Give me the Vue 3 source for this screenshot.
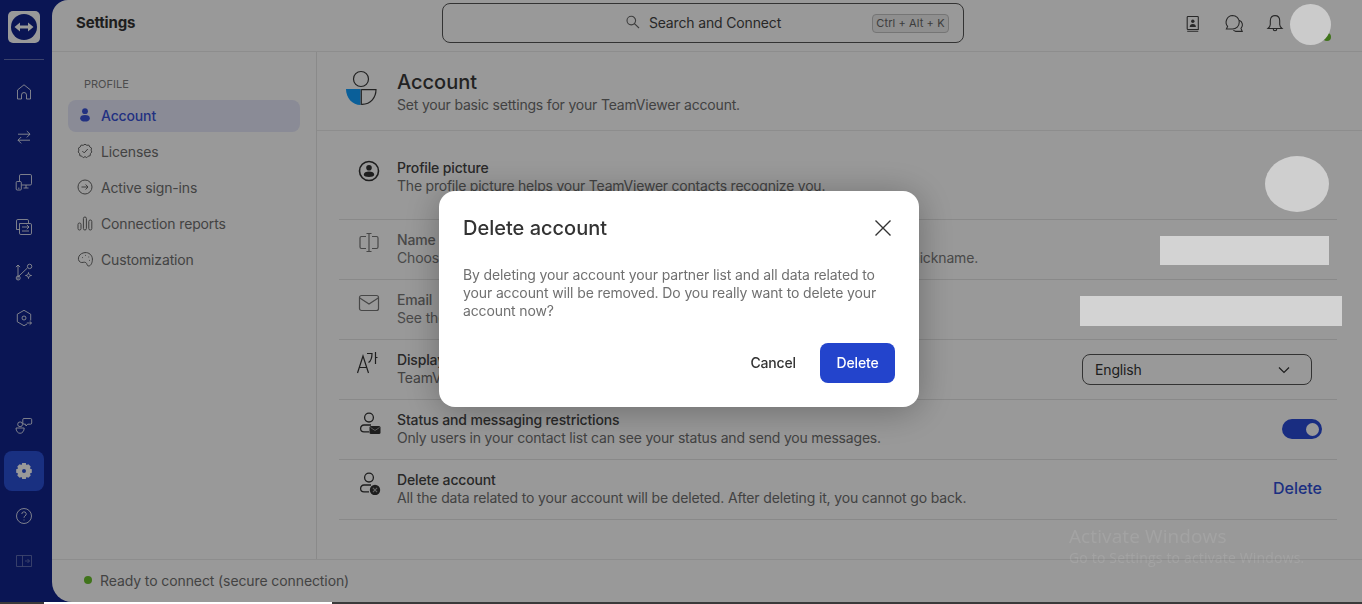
<script setup>
const topIcons = [
  'M2.5 16V7L9 1.8 15.5 7V16H11.5V12A2.5 2.5 0 0 0 6.5 12V16Z',
  'M3 6.2H15M11.8 3L15 6.2 11.8 9.4M15 12.2H3M6.2 9L3 12.2 6.2 15.4',
  'M4.5 8V2.8A1.3 1.3 0 0 1 5.8 1.5H15.2A1.3 1.3 0 0 1 16.5 2.8V10.7A1.3 1.3 0 0 1 15.2 12H6.8M11 12V15M8.5 15H13.5M2.2 8.5H5.3A1 1 0 0 1 6.3 9.5V16A1 1 0 0 1 5.3 17H2.2A1 1 0 0 1 1.2 16V9.5A1 1 0 0 1 2.2 8.5ZM3 15.2H4.5',
  'M1.5 11.5V2.8A1.3 1.3 0 0 1 2.8 1.5H12.2A1.3 1.3 0 0 1 13.5 2.8V5M4.5 5.5H15.2A1.3 1.3 0 0 1 16.5 6.8V15.2A1.3 1.3 0 0 1 15.2 16.5H5.8A1.3 1.3 0 0 1 4.5 15.2ZM1.5 11.5H4.5M7 9H14M11.8 6.8L14 9 11.8 11.2M14 13H7',
  'M3 16.5V2M.9 4.1L3 2 5.1 4.1M3.3 13.6L12.4 5M5.2 15A2 2 0 1 1 1.2 15 2 2 0 1 1 5.2 15ZM16.8 3.4A2.2 2.2 0 1 1 12.4 3.4 2.2 2.2 0 1 1 16.8 3.4ZM13.5 9.5C13.8 11.6 14.4 12.2 16.5 12.5 14.4 12.8 13.8 13.4 13.5 15.5 13.2 13.4 12.6 12.8 10.5 12.5 12.6 12.2 13.2 11.6 13.5 9.5Z',
  'M15.7 11.5V5.2L9 1.3 2.3 5.2V12.8L9 16.7 12 15M11 9A2 2 0 1 1 7 9 2 2 0 1 1 11 9ZM11.8 14H16.5M14.6 12.2L16.5 14 14.6 15.8'
]
const navItems = [
  { label: 'Licenses', d: 'M8 1.2L9.8 2.3 11.9 2.1 12.8 4 14.6 5.1 14.1 7.1 14.8 9 13.4 10.6 13.2 12.7 11.2 13.2 9.7 14.7 8 13.6 6.3 14.7 4.8 13.2 2.8 12.7 2.6 10.6 1.2 9 1.9 7.1 1.4 5.1 3.2 4 4.1 2.1 6.2 2.3ZM5.3 8L7.2 9.9 10.8 6' },
  { label: 'Active sign-ins', d: 'M15 8A7 7 0 1 1 1 8 7 7 0 1 1 15 8ZM4.5 8H11M8.6 5.5L11 8 8.6 10.5' },
  { label: 'Connection reports', d: 'M1 9.5A1.5 1.5 0 0 1 4 9.5V13.5A1.5 1.5 0 0 1 1 13.5ZM6.4 3.5A1.5 1.5 0 0 1 9.4 3.5V13.5A1.5 1.5 0 0 1 6.4 13.5ZM11.8 6.5A1.5 1.5 0 0 1 14.8 6.5V13.5A1.5 1.5 0 0 1 11.8 13.5Z' },
  { label: 'Customization', d: 'M8 1.6C11.8 1.2 15.2 4 15.4 8 15.5 11.5 14 14.8 11.8 15 9.8 15.2 10.4 12.6 8.8 11.6 7 10.5 5.3 12.2 3.4 11.2 1.2 10 .9 7.4 2 5.2 3.2 3 5.3 1.9 8 1.6ZM5 6.6H5.8M8 4.4H8.8M11.4 6H12.2M12.2 9.4H13' }
]
</script>

<template>
  <div class="screen">
    <div class="window">
      <aside class="rail">
        <div class="logo">
          <svg width="26" height="26" viewBox="0 0 26 26"><circle cx="13" cy="13" r="13" fill="#11248d"/><path d="M3.5 13L9 8.6V11.4H17V8.6L22.5 13 17 17.4V14.6H9V17.4Z" fill="#fff"/></svg>
        </div>
        <div class="rail-rule"></div>
        <div v-for="d in topIcons" :key="d" class="rail-slot">
          <svg width="18" height="18" viewBox="0 0 18 18" class="line-white"><path :d="d"/></svg>
        </div>
        <div class="rail-bottom">
          <div class="rail-tile">
            <svg width="18" height="18" viewBox="0 0 18 18" class="line-white"><path d="M7.5 7.3A2.4 2.4 0 1 1 2.7 7.3 2.4 2.4 0 1 1 7.5 7.3ZM1 11H9.2C9.2 14 7.4 16.3 5.1 16.3 2.8 16.3 1 14 1 11ZM9 1.5H15.5A1.2 1.2 0 0 1 16.7 2.7V6A1.2 1.2 0 0 1 15.5 7.2H12.8L11 9 10.6 7.2H9A1.2 1.2 0 0 1 7.8 6V2.7A1.2 1.2 0 0 1 9 1.5Z"/></svg>
          </div>
          <div class="rail-tile active">
            <svg width="18" height="18" viewBox="0 0 18 18"><path fill="#fff" fill-rule="evenodd" d="M7.2 1H10.8L11.4 3 13.4 2.2 15.7 4.5 14.9 6.6 16.8 7.2V10.8L14.9 11.4 15.7 13.5 13.4 15.8 11.4 15 10.8 17H7.2L6.6 15 4.6 15.8 2.3 13.5 3.1 11.4 1.2 10.8V7.2L3.1 6.6 2.3 4.5 4.6 2.2 6.6 3ZM11 9A2 2 0 1 0 7 9 2 2 0 1 0 11 9Z"/></svg>
          </div>
          <div class="rail-tile">
            <svg width="18" height="18" viewBox="0 0 18 18" class="line-white"><path d="M16.5 9A7.5 7.5 0 1 1 1.5 9 7.5 7.5 0 1 1 16.5 9ZM6.8 7A2.2 2.2 0 1 1 10 9C9.3 9.4 9 9.9 9 10.8M9 12.6V13.4"/></svg>
          </div>
          <div class="rail-tile dim">
            <svg width="18" height="18" viewBox="0 0 18 18" class="line-white"><path d="M1.5 3.5H16.5V14.5H1.5ZM7.5 3.5V14.5M10 9H14.5M12.5 7L14.5 9 12.5 11"/></svg>
          </div>
        </div>
      </aside>

      <div class="main">
        <header class="topbar">
          <div class="brand">Settings</div>
          <div class="search">
            <div class="search-label">
              <svg width="14" height="14" viewBox="0 0 14 14" class="line-soft"><path d="M9.6 5.6A4.3 4.3 0 1 1 1 5.6 4.3 4.3 0 1 1 9.6 5.6ZM8.7 8.8L13 13"/></svg>
              <span>Search and Connect</span>
            </div>
            <kbd class="shortcut">Ctrl + Alt + K</kbd>
          </div>
          <div class="top-actions">
            <svg width="18" height="18" viewBox="0 0 18 18" class="line-dark"><path d="M4 1.5H13.5A.8.8 0 0 1 14.3 2.3V14.5H4A.8.8 0 0 1 3.2 13.7V2.3A.8.8 0 0 1 4 1.5ZM3.2 16.3H14.3"/><circle cx="8.8" cy="6.2" r="1.7" fill="#444" stroke="none"/><path d="M5.7 12C5.7 10 6.8 9 8.8 9S11.9 10 11.9 12Z" fill="#444" stroke="none"/></svg>
            <svg width="20" height="20" viewBox="0 0 20 20" class="line-dark"><path d="M8.5 1.5A6.7 6.7 0 0 1 8.5 15H2.4L3.6 12.4A6.7 6.7 0 0 1 8.5 1.5ZM15.2 6.3A5 5 0 0 1 17 14.5L18.2 17.4H11.8A5 5 0 0 1 9.4 16.2"/></svg>
            <svg width="18" height="20" viewBox="0 0 18 20" class="line-dark"><path d="M9 1.6C12 1.6 13.7 3.8 13.7 6.8V10.5C13.7 12.2 14.5 13.2 16 14.5H2C3.5 13.2 4.3 12.2 4.3 10.5V6.8C4.3 3.8 6 1.6 9 1.6ZM7.2 14.8C7.2 17.4 10.8 17.4 10.8 14.8"/></svg>
            <div class="me">
              <span class="me-dot"></span>
              <span class="me-mask"></span>
            </div>
          </div>
        </header>

        <div class="body">
          <nav class="side">
            <div class="side-heading">PROFILE</div>
            <a class="side-item current">
              <svg width="14" height="14" viewBox="0 0 14 14" fill="currentColor"><circle cx="7" cy="3.2" r="2.9"/><path d="M2.2 10.2C2.2 8 3.8 7 7 7S11.8 8 11.8 10.2C11.8 12.5 10 13.6 7 13.6S2.2 12.5 2.2 10.2Z"/></svg>
              <span>Account</span>
            </a>
            <a v-for="item in navItems" :key="item.label" class="side-item">
              <svg width="16" height="16" viewBox="0 0 16 16" class="line-grey"><path :d="item.d"/></svg>
              <span>{{ item.label }}</span>
            </a>
          </nav>

          <section class="content">
            <div class="content-head">
              <svg width="34" height="36" viewBox="0 0 34 36" class="head-icon">
                <circle cx="16" cy="9" r="7.5" fill="none" stroke="#3a3a3a" stroke-width="1.2"/>
                <path d="M1 19H15.5V35C7.5 35 1 28 1 19Z" fill="#119eff"/>
                <path d="M17 19.6H31C31 27.5 26 34 17 34.4" fill="none" stroke="#3a3a3a" stroke-width="1.2"/>
                <path d="M16.3 19V35" stroke="#3a3a3a" stroke-width="1.2"/>
              </svg>
              <div>
                <h1>Account</h1>
                <p>Set your basic settings for your TeamViewer account.</p>
              </div>
            </div>

            <div class="rows">
              <div class="row first">
                <svg class="row-icon" width="24" height="24" viewBox="0 0 24 24"><circle cx="12" cy="12" r="9.5" fill="none" stroke="#333" stroke-width="1.6"/><circle cx="12" cy="8.8" r="2.8" fill="#333"/><path d="M6.8 15.8C6.8 13.6 9 12.6 12 12.6S17.2 13.6 17.2 15.8C17.2 17.3 14.8 18 12 18S6.8 17.3 6.8 15.8Z" fill="#333"/></svg>
                <div class="row-text"><h2>Profile picture</h2><p>The profile picture helps your TeamViewer contacts recognize you.</p></div>
                <span class="mask mask-picture"></span>
              </div>
              <div class="row">
                <svg class="row-icon" width="24" height="24" viewBox="0 0 24 24"><path d="M9 5.5H4.5A1.5 1.5 0 0 0 3 7V16A1.5 1.5 0 0 0 4.5 17.5H9M15 5.5H19.5A1.5 1.5 0 0 1 21 7V16A1.5 1.5 0 0 1 19.5 17.5H15M12 2.5V20.5M9.5 2.5H14.5M9.5 20.5H14.5" fill="none" stroke="#777" stroke-width="1.2"/></svg>
                <div class="row-text dimmed"><h2>Name</h2><p>Choose the name that your contacts see. You can use your full name or a short nickname.</p></div>
                <span class="mask mask-name"></span>
              </div>
              <div class="row">
                <svg class="row-icon" width="24" height="24" viewBox="0 0 24 24"><rect x="2.5" y="4.5" width="19" height="15" rx="2" fill="none" stroke="#777" stroke-width="1.2"/><path d="M2.8 7L12 13 21.2 7" fill="none" stroke="#777" stroke-width="1.2"/></svg>
                <div class="row-text dimmed"><h2>Email</h2><p>See the email address for your TeamViewer account.</p></div>
                <span class="mask mask-email"></span>
              </div>
              <div class="row">
                <svg class="row-icon" width="24" height="24" viewBox="0 0 24 24"><path d="M.5 22L6 5 11.5 22M2.3 16.5H9.7M10 2.5H15C15 7 14 10 11.5 11.5M18.5 1V13M18.5 6.5H20.5" fill="none" stroke="#333" stroke-width="1.2"/></svg>
                <div class="row-text"><h2>Display language</h2><p>TeamViewer will be displayed in the selected language.</p></div>
                <div class="select"><span>English</span>
                  <svg width="12" height="8" viewBox="0 0 12 8"><path d="M1 1.5L6 6.5 11 1.5" fill="none" stroke="#333" stroke-width="1.2"/></svg>
                </div>
              </div>
              <div class="row">
                <svg class="row-icon" width="24" height="24" viewBox="0 0 24 24"><circle cx="12" cy="6.6" r="4.4" fill="none" stroke="#333" stroke-width="1.3"/><path d="M14 14H7A3.4 3.4 0 0 0 7 20.8H12" fill="none" stroke="#333" stroke-width="1.3"/><rect x="12.5" y="15" width="11" height="8" rx="1.5" fill="#333"/><path d="M13.5 16.5L18 19.5 22.5 16.5" fill="none" stroke="#999" stroke-width="1"/></svg>
                <div class="row-text tight"><h2>Status and messaging restrictions</h2><p>Only users in your contact list can see your status and send you messages.</p></div>
                <div class="toggle"><span></span></div>
              </div>
              <div class="row">
                <svg class="row-icon" width="24" height="24" viewBox="0 0 24 24"><circle cx="12" cy="6.6" r="4.4" fill="none" stroke="#333" stroke-width="1.3"/><path d="M14 14H7A3.4 3.4 0 0 0 7 20.8H12" fill="none" stroke="#333" stroke-width="1.3"/><circle cx="18" cy="19" r="5.2" fill="#333"/><path d="M15.9 16.9L20.1 21.1M20.1 16.9L15.9 21.1" stroke="#aaa" stroke-width="1.1"/></svg>
                <div class="row-text"><h2>Delete account</h2><p>All the data related to your account will be deleted. After deleting it, you cannot go back.</p></div>
                <a class="link">Delete</a>
              </div>
            </div>
          </section>
        </div>

        <footer class="status">
          <span class="status-dot"></span>
          <span>Ready to connect (secure connection)</span>
        </footer>
      </div>

      <div class="overlay">
        <div class="dialog" role="dialog">
          <div class="dialog-head">
            <h3>Delete account</h3>
            <svg width="18" height="18" viewBox="0 0 18 18"><path d="M1.5 1.5L16.5 16.5M16.5 1.5L1.5 16.5" stroke="#333" stroke-width="1.4" fill="none"/></svg>
          </div>
          <p class="dialog-copy">By deleting your account your partner list and all data related to your account will be removed. Do you really want to delete your account now?</p>
          <div class="dialog-actions">
            <button class="ghost">Cancel</button>
            <button class="primary">Delete</button>
          </div>
        </div>
      </div>

      <div class="watermark">
        <div class="wm-title">Activate Windows</div>
        <div class="wm-sub">Go to Settings to activate Windows.</div>
      </div>
    </div>

    <div class="taskbar">
      <span class="tb-dark tb-a"></span>
      <span class="tb-light"></span>
      <span class="tb-dark tb-b"></span>
    </div>
  </div>
</template>

<style>
html, body { margin: 0; padding: 0; overflow: hidden; }
</style>

<style scoped>
.screen {
  width: 1362px;
  height: 604px;
  display: flex;
  flex-direction: column;
  font-family: Inter, "Liberation Sans", sans-serif;
  color: #222;
  letter-spacing: -0.15px;
}
.window {
  position: relative;
  flex: 1;
  min-height: 0;
  display: flex;
  background: #11248d;
  overflow: hidden;
}
.taskbar { height: 2px; display: flex; }
.tb-dark { background: #3a3a3a; }
.tb-a { width: 44px; }
.tb-light { width: 288px; background: #fff; }
.tb-b { flex: 1; }

/* rail */
.rail {
  width: 52px;
  flex: none;
  display: flex;
  flex-direction: column;
  align-items: center;
  padding: 11px 4px 21px 0;
  box-sizing: border-box;
}
.logo {
  width: 32px;
  height: 32px;
  background: #fff;
  border-radius: 5px;
  display: flex;
  align-items: center;
  justify-content: center;
  flex: none;
}
.rail-rule {
  width: 40px;
  height: 1px;
  background: rgba(255,255,255,.35);
  margin: 16px 0 9px;
  flex: none;
}
.rail-slot {
  height: 45.2px;
  display: flex;
  align-items: center;
  justify-content: center;
  flex: none;
}
.rail-bottom {
  margin-top: auto;
  display: flex;
  flex-direction: column;
  gap: 5px;
}
.rail-tile {
  width: 40px;
  height: 40px;
  border-radius: 8px;
  display: flex;
  align-items: center;
  justify-content: center;
}
.rail-tile.active { background: #2b50d8; }
.rail-tile.dim { opacity: .4; }
.line-white { fill: none; stroke: rgba(255,255,255,.8); stroke-width: 1; }
.line-dark { fill: none; stroke: #444; stroke-width: 1.1; }
.line-soft { fill: none; stroke: #666; stroke-width: 1.1; }
.line-grey { fill: none; stroke: #666; stroke-width: 1; }

/* main */
.main {
  flex: 1;
  min-width: 0;
  display: flex;
  flex-direction: column;
  background: #fff;
  border-radius: 16px 0 0 20px;
}
.topbar {
  height: 52px;
  flex: none;
  box-sizing: border-box;
  display: flex;
  align-items: flex-start;
  border-bottom: 1px solid #ececec;
  padding-left: 24px;
}
.brand {
  width: 366px;
  flex: none;
  font-size: 15px;
  font-weight: 700;
  line-height: 46px;
  color: #333;
}
.search {
  width: 522px;
  height: 40px;
  flex: none;
  margin-top: 3px;
  padding-bottom: 2px;
  box-sizing: border-box;
  border: 1px solid #555;
  border-radius: 8px;
  display: flex;
  align-items: center;
  position: relative;
  justify-content: center;
  font-size: 14px;
  color: #444;
}
.search-label { display: flex; align-items: center; gap: 9px; margin-left: 1px; }
.shortcut {
  position: absolute;
  right: 14px;
  top: 10px;
  height: 19px;
  width: 77px;
  box-sizing: border-box;
  background: #eee;
  border: 1px solid #c4c4c4;
  border-radius: 4px;
  font: 11px/17px Inter, "Liberation Sans", sans-serif;
  letter-spacing: .1px;
  color: #666;
  text-align: center;
}
.top-actions {
  margin-left: auto;
  margin-right: 31px;
  margin-top: 4px;
  display: flex;
  align-items: center;
  height: 40px;
  gap: 22px;
}
.me { position: relative; width: 41px; height: 41px; margin-left: -16px; }
.me-mask { position: absolute; inset: 0; border-radius: 50%; background: #cbcbcb; z-index: 2; }
.me-dot { position: absolute; right: 0; bottom: 4px; width: 8px; height: 8px; border-radius: 50%; background: #6cc12e; }

.body { flex: 1; min-height: 0; display: flex; }
.side {
  width: 265px;
  flex: none;
  box-sizing: border-box;
  border-right: 1px solid #e6e6e6;
  padding: 24px 16px 0;
  display: flex;
  flex-direction: column;
  gap: 4px;
}
.side-heading {
  font-size: 11px;
  line-height: 16px;
  color: #808080;
  padding-left: 16px;
  margin-bottom: 4px;
  letter-spacing: 0;
}
.side-item {
  height: 32px;
  box-sizing: border-box;
  padding-bottom: 2px;
  display: flex;
  align-items: center;
  gap: 8px;
  padding-left: 9px;
  border-radius: 8px;
  font-size: 14px;
  color: #707070;
}
.side-item.current { background: #e6e8fb; color: #3a52d8; font-weight: 500; padding-left: 10px; gap: 9px; }

.content { flex: 1; min-width: 0; display: flex; flex-direction: column; }
.content-head {
  height: 79px;
  flex: none;
  box-sizing: border-box;
  border-bottom: 1px solid #ececec;
  display: flex;
  padding: 18px 0 0 28px;
  gap: 18px;
}
.content-head h1 { margin: 0; font-size: 20px; font-weight: 500; line-height: 24px; letter-spacing: 0; color: #3a3a3a; }
.content-head p { margin: 2px 0 0; font-size: 14px; line-height: 18px; color: #6e6e6e; letter-spacing: -0.19px; }

.rows { padding: 19px 25px 0 22px; }
.row {
  position: relative;
  height: 60px;
  box-sizing: border-box;
  border-bottom: 1px solid #e4e4e4;
  display: flex;
  align-items: flex-start;
  padding: 11px 15px 0 18px;
}
.row.first { height: 70px; padding-top: 9px; }
.row.first .row-text p { letter-spacing: -0.22px; }
.row-icon { flex: none; margin-right: 16px; }
.row-text { flex: 1; min-width: 0; white-space: nowrap; }
.row-text h2 { margin: 0; font-size: 14px; font-weight: 500; line-height: 18px; color: #444; }
.row-text p { margin: 0; font-size: 14px; line-height: 18px; color: #6e6e6e; }
.row-text.tight p { letter-spacing: -0.19px; }
.row-text.dimmed h2, .row-text.dimmed p { color: #7a7a7a; }

.mask { position: absolute; z-index: 2; background: #d3d3d3; }
.mask-picture { width: 64px; height: 56px; right: 8px; top: 6px; border-radius: 50%; background: #cfcfcf; }
.mask-name { width: 169px; height: 29px; right: 8px; top: 16px; }
.mask-email { width: 262px; height: 30px; right: -5px; top: 16px; }

.select {
  width: 230px;
  height: 31px;
  flex: none;
  margin: 3px 10px 0 0;
  box-sizing: border-box;
  border: 1px solid #555;
  border-radius: 8px;
  display: flex;
  align-items: center;
  justify-content: space-between;
  padding: 0 21px 0 12px;
  font-size: 14px;
  color: #333;
}
.toggle {
  width: 40px;
  height: 20px;
  flex: none;
  margin-top: 8px;
  background: #2a4bd8;
  border-radius: 10px;
  display: flex;
  align-items: center;
  justify-content: flex-end;
  padding-right: 3px;
  box-sizing: border-box;
}
.toggle span { width: 13px; height: 13px; background: #fff; border-radius: 50%; }
.link { font-size: 16px; font-weight: 500; line-height: 20px; margin-top: 7px; color: #2f4fd8; letter-spacing: 0; }

.status {
  height: 43px;
  flex: none;
  box-sizing: border-box;
  border-top: 1px solid #ececec;
  padding-bottom: 2px;
  display: flex;
  align-items: center;
  padding-left: 32px;
  gap: 8px;
  font-size: 14px;
  color: #707070;
  letter-spacing: -0.1px;
}
.status-dot { width: 8px; height: 8px; border-radius: 50%; background: #6cc12e; }

/* modal */
.overlay {
  position: absolute;
  inset: 0;
  z-index: 1;
  background: rgba(0,0,0,.4);
  backdrop-filter: blur(.6px);
  display: flex;
  align-items: center;
  justify-content: center;
  padding: 0 4px 4px 0;
}
.dialog {
  width: 480px;
  height: 216px;
  box-sizing: border-box;
  background: #fff;
  border-radius: 16px;
  padding: 24px;
  box-shadow: 0 4px 36px rgba(0,0,0,.3);
  display: flex;
  flex-direction: column;
}
.dialog-head { display: flex; align-items: center; justify-content: space-between; height: 26px; padding-right: 3px; }
.dialog-head h3 { margin: 0; font-size: 20px; font-weight: 500; color: #333; letter-spacing: 0; }
.dialog-copy { margin: 25px 0 0; font-size: 14px; line-height: 18px; color: #707070; letter-spacing: -0.12px; }
.dialog-actions { margin-top: auto; display: flex; justify-content: flex-end; align-items: center; gap: 24px; }
.dialog-actions button { font: 500 14px Inter, "Liberation Sans", sans-serif; letter-spacing: -0.15px; border: 0; padding: 0 0 2px; background: none; }
.ghost { color: #333; }
.dialog-actions .primary { width: 75px; height: 40px; background: #2344cc; color: #fff; border-radius: 8px; }

.watermark {
  position: absolute;
  z-index: 3;
  left: 1069px;
  top: 524px;
  font-family: "Open Sans", sans-serif;
  color: rgba(255,255,255,.1);
  pointer-events: none;
  letter-spacing: 0;
}
.wm-title { font-size: 19px; line-height: 24px; letter-spacing: .1px; }
.wm-sub { font-size: 14px; line-height: 20px; letter-spacing: .17px; }
</style>
